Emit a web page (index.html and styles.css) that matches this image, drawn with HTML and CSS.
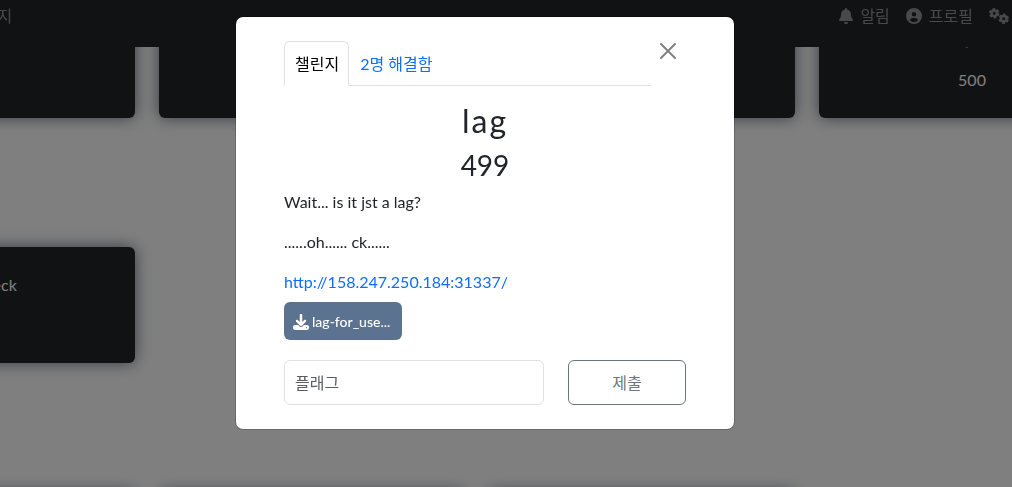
FILE: index.html
```html
<!DOCTYPE html>
<html lang="ko">
<head>
<meta charset="utf-8">
<meta name="viewport" content="width=device-width, initial-scale=1">
<title>챌린지</title>
<link rel="stylesheet" href="styles.css">
</head>
<body>
<nav class="navbar">
  <a class="nav-item nav-first" href="#">챌린지</a>
  <a class="nav-item" href="#">
    <svg class="icon icon-bell" viewBox="0 0 448 512" aria-hidden="true"><path d="M224 0c-17.700 0-32 14.300-32 32v19.200C119 66 64 130.600 64 208v18.800c0 47-17.300 92.400-48.500 127.600l-7.400 8.300c-8.400 9.400-10.400 22.900-5.300 34.400S19.400 416 32 416h384c12.600 0 24-7.400 29.200-18.900s3.100-25-5.300-34.400l-7.400-8.300C401.300 319.200 384 273.900 384 226.800V208c0-77.400-55-142-128-156.800V32c0-17.700-14.300-32-32-32zm45.300 493.300c12-12 18.700-28.300 18.700-45.300H160c0 17 6.700 33.300 18.700 45.300S207 512 224 512s33.300-6.700 45.300-18.700z"/></svg>
    <span>알림</span>
  </a>
  <a class="nav-item" href="#">
    <svg class="icon icon-user" viewBox="0 0 512 512" aria-hidden="true"><path fill-rule="evenodd" d="M256 0a256 256 0 1 0 0 512 256 256 0 0 0 0-512zm0 128a72 72 0 1 1 0 144 72 72 0 0 1 0-144zM128 390c15-42 50-70 96-70h64c46 0 81 28 96 70-32 36-78 58-128 58s-96-22-128-58z"/></svg>
    <span>프로필</span>
  </a>
  <a class="nav-item" href="#" aria-label="설정">
    <svg class="icon icon-gears" viewBox="0 0 40 32" aria-hidden="true"><g fill="none" stroke="currentColor"><circle cx="10.500" cy="10.500" r="5.500" stroke-width="5"/><circle cx="10.500" cy="10.500" r="8.500" stroke-width="4" stroke-dasharray="5.200 3.700"/><circle cx="29.500" cy="21.500" r="5.500" stroke-width="5"/><circle cx="29.500" cy="21.500" r="8.500" stroke-width="4" stroke-dasharray="5.200 3.700" stroke-dashoffset="7"/></g></svg>
  </a>
</nav>

<main class="board">
  <section class="row">
    <button class="card" type="button"></button>
    <button class="card" type="button"></button>
    <button class="card" type="button"></button>
    <button class="card" type="button"><span class="card-title card-title-short">,</span><span>500</span></button>
  </section>
  <section class="row">
    <button class="card" type="button"><span class="card-title">mic check</span></button>
  </section>
  <section class="row">
    <button class="card" type="button"></button>
    <button class="card" type="button"></button>
    <button class="card" type="button"></button>
  </section>
</main>

<div class="backdrop">
  <div class="modal" role="dialog" aria-modal="true" aria-labelledby="challenge-name">
    <header class="modal-head">
      <div class="tabs" role="tablist">
        <button class="tab tab-active" type="button" role="tab" aria-selected="true">챌린지</button>
        <button class="tab" type="button" role="tab" aria-selected="false">2명 해결함</button>
      </div>
      <button class="close" type="button" aria-label="닫기">
        <svg class="close-icon" viewBox="0 0 16 16" aria-hidden="true"><path d="M1 1l14 14M15 1L1 15" fill="none" stroke="currentColor" stroke-width="2" stroke-linecap="round"/></svg>
      </button>
    </header>
    <h2 class="name" id="challenge-name">lag</h2>
    <h3 class="value">499</h3>
    <div class="description">
      <p>Wait... is it jst a lag?</p>
      <p>......oh...... ck......</p>
      <p><a class="link" href="http://158.247.250.184:31337/">http://158.247.250.184:31337/</a></p>
    </div>
    <a class="download" href="#">
      <svg class="download-icon" viewBox="0 0 512 512" aria-hidden="true"><path fill-rule="evenodd" d="M296 32c0-22-18-32-40-32s-40 10-40 32v224l-62-62c-16-16-40-16-54 0s-14 38 0 54l128 128c16 16 40 16 56 0l128-128c14-16 14-40 0-54s-38-16-54 0l-62 62V32zM64 352c-35.300 0-64 28.700-64 64v32c0 35.300 28.700 64 64 64h384c35.300 0 64-28.700 64-64v-32c0-35.300-28.700-64-64-64H346.500l-45.300 45.300c-25 25-65.500 25-90.500 0L165.500 352H64zm368 60a20 20 0 1 1 0 40 20 20 0 0 1 0-40z"/></svg>
      <span>lag-for_use...</span>
    </a>
    <form class="submit-row">
      <input class="flag" type="text" placeholder="플래그" aria-label="플래그">
      <button class="submit" type="button">제출</button>
    </form>
  </div>
</div>
</body>
</html>
```
FILE: styles.css
```css
* {
  box-sizing: border-box;
}

body {
  margin: 0;
  height: 100vh;
  overflow: hidden;
  background: #fff;
  color: #212529;
  font-family: Lato, "Noto Sans CJK KR", sans-serif;
  font-size: 16px;
  line-height: 24px;
}

button,
input {
  font: inherit;
}

.navbar {
  position: fixed;
  top: 0;
  left: 0;
  right: 0;
  z-index: 1;
  display: flex;
  gap: 16px;
  height: 47px;
  padding: 4px 3px 0 0;
  background: #212529;
}

.nav-item {
  display: flex;
  align-items: center;
  gap: 7px;
  height: 24px;
  color: #909294;
  text-decoration: none;
  white-space: nowrap;
}

.nav-first {
  margin: 0 auto 0 -32px;
}

.icon {
  height: 16px;
  fill: currentColor;
}

.icon-bell {
  width: 14px;
}

.icon-user {
  width: 16px;
}

.icon-gears {
  width: 20px;
}

.board {
  display: grid;
  gap: 129px;
  margin-left: -171px;
  padding-top: 2px;
}

.row {
  display: grid;
  grid-template-columns: repeat(4, 306px);
  gap: 24px;
}

.card {
  display: flex;
  flex-direction: column;
  align-items: center;
  gap: 16px;
  height: 116px;
  padding: 26px 16px;
  border: 0;
  border-radius: 6px;
  background: #212529;
  box-shadow: 0 0 16px #6c7386;
  color: #fff;
}

.card-title-short {
  padding-right: 10px;
}

.backdrop {
  position: fixed;
  inset: 0;
  z-index: 2;
  display: flex;
  justify-content: center;
  align-items: flex-start;
  padding: 16px 42px 16px 0;
  background: rgba(0, 0, 0, 0.5);
}

.modal {
  width: 100%;
  max-width: 500px;
  padding: 24px 48px;
  border: 1px solid rgba(0, 0, 0, 0.18);
  border-radius: 8px;
  background: #fff;
  background-clip: padding-box;
}

.modal-head {
  display: flex;
  align-items: flex-start;
  gap: 9px;
}

.tabs {
  display: flex;
  flex: 1;
  height: 45px;
  border-bottom: 1px solid #dee2e6;
}

.tab {
  height: 45px;
  padding: 0 10px 0 10px;
  border: 1px solid transparent;
  border-radius: 6px 6px 0 0;
  background: none;
  color: #0d6efd;
}

.tab-active {
  padding-right: 9px;
  border-color: #dee2e6 #dee2e6 #fff;
  background: #fff;
  color: #000;
}

.close {
  display: flex;
  margin-right: 10px;
  padding: 2px 0;
  border: 0;
  background: none;
  color: #808080;
}

.close-icon {
  width: 16px;
  height: 16px;
}

.name,
.value {
  margin: 0 0 8px;
  font-weight: 400;
  text-align: center;
}

.name {
  margin-top: 16px;
  font-size: 32px;
  line-height: 38px;
  letter-spacing: 2px;
}

.value {
  font-size: 28px;
  line-height: 34px;
}

.description {
  display: grid;
  gap: 16px;
}

.description p {
  margin: 0;
}

.link {
  color: #0d6efd;
  text-decoration: none;
}

.download {
  display: inline-flex;
  align-items: center;
  gap: 3px;
  width: 118px;
  height: 38px;
  margin-top: 8px;
  padding: 1px 9px 0;
  border-radius: 6px;
  background: #5b7290;
  color: #fff;
  font-size: 14px;
  font-weight: 500;
  text-decoration: none;
  white-space: nowrap;
}

.download-icon {
  flex: none;
  width: 16px;
  height: 16px;
  fill: currentColor;
}

.submit-row {
  display: grid;
  grid-template-columns: 1fr 118px;
  gap: 24px;
  margin-top: 20px;
}

.flag,
.submit {
  min-width: 0;
  height: 45px;
  border-radius: 6px;
  background: #fff;
}

.flag {
  padding: 0 10px;
  border: 1px solid #dee2e6;
  color: #212529;
}

.flag::placeholder {
  color: #595c5f;
  opacity: 1;
}

.submit {
  border: 1px solid #6c757d;
  color: #6c757d;
}
```
